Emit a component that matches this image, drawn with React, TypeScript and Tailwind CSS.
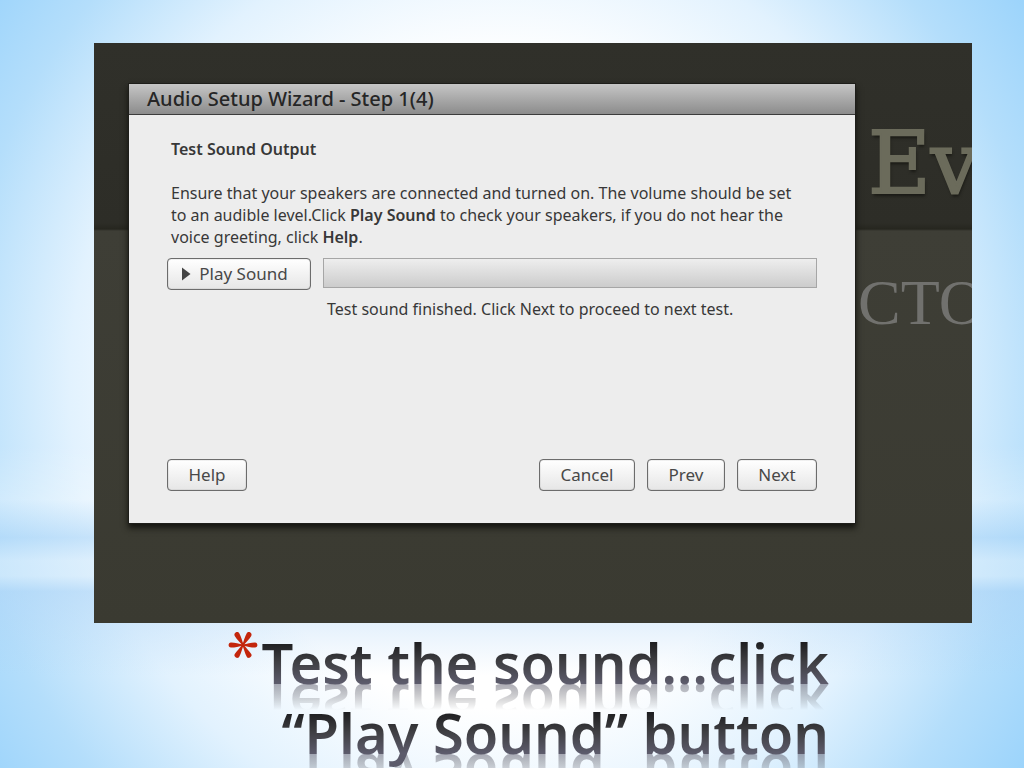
import React from 'react';

interface WizardButtonProps {
    children: React.ReactNode;
    className?: string;
}

const WizardButton: React.FC<WizardButtonProps> = ({ children, className = '' }) => (
    <button
        type="button"
        className={`flex h-8 items-center justify-center gap-2 rounded border border-[#6c6c6c] bg-linear-to-b from-white to-[#e6e6e6] text-[17px] text-[#484848] shadow-[inset_0_0_1px_#6c6c6c] ${className}`}
    >
        {children}
    </button>
);

const PlayIcon: React.FC = () => (
    <svg width="9" height="14" viewBox="0 0 9 14" aria-hidden="true">
        <path d="M0 0.5 L8.5 7 L0 13.5 Z" fill="#454545" />
    </svg>
);

const PETAL = 'M0 0.7 C4 1.2 8 2.6 12 2.6 C15.2 2.6 15.2 -2.6 12 -2.6 C8 -2.6 4 -1.2 0 -0.7 Z';

// Six-petal bullet in front of the slide title
const BulletIcon: React.FC = () => (
    <svg width="30" height="30" viewBox="-15 -15 30 30" fill="#c3260c" role="img" aria-label="*">
        {[0, 60, 120, 180, 240, 300].map(angle => (
            <path key={angle} d={PETAL} transform={`rotate(${angle})`} />
        ))}
    </svg>
);

const TitleLine: React.FC<{ children: React.ReactNode }> = ({ children }) => (
    <span className="block h-[70px] bg-linear-to-b from-[#1c1c1e] from-20% via-[#3f3f43] via-50% to-[#5c5b6b] to-80% bg-clip-text text-transparent [-webkit-box-reflect:below_-26px_linear-gradient(transparent_44%,rgba(0,0,0,0.5)_81%,transparent_81%)]">
        {children}
    </span>
);

const AudioWizard: React.FC = () => (
    <section
        aria-labelledby="wizard-title"
        className="flex min-w-0 flex-1 flex-col border border-[#1e1e1a] bg-[#ededed] shadow-[0_4px_6px_#14140f]"
    >
        <header className="flex h-[31px] items-center border-b border-[#3c3c3c] bg-linear-to-b from-[#c6c6c6] to-[#8c8c8c] px-[18px]">
            <h2 id="wizard-title" className="text-xl leading-7 font-medium text-[#262626]">Audio Setup Wizard - Step 1(4)</h2>
        </header>

        <div className="flex flex-1 flex-col px-[38px] pt-[23px] pb-8 text-[#383838]">
            <h3 className="px-1 text-base leading-[22px] font-semibold">Test Sound Output</h3>
            <p className="mt-[22px] px-1 text-base leading-[22px] whitespace-nowrap">
                Ensure that your speakers are connected and turned on. The volume should be set<br />
                to an audible level.Click <b className="font-semibold">Play Sound</b> to check your speakers, if you do not hear the<br />
                voice greeting, click <b className="font-semibold">Help</b>.
            </p>

            <div className="mt-2.5 grid grid-cols-[144px_1fr] gap-x-3">
                <WizardButton className="w-full pr-2">
                    <PlayIcon />
                    Play Sound
                </WizardButton>
                <div
                    role="progressbar"
                    aria-label="Test sound"
                    className="h-[30px] border border-[#a6a6a6] bg-linear-to-b from-[#eeeeee] to-[#cccccc]"
                />
                <p className="col-start-2 mt-2 px-1 text-base leading-[22px] whitespace-nowrap">
                    Test sound finished. Click Next to proceed to next test.
                </p>
            </div>

            <div className="mt-auto flex items-center gap-3">
                <WizardButton className="mr-auto w-20">Help</WizardButton>
                <WizardButton className="w-24">Cancel</WizardButton>
                <WizardButton className="w-[78px]">Prev</WizardButton>
                <WizardButton className="w-20">Next</WizardButton>
            </div>
        </div>
    </section>
);

const App: React.FC = () => {
    return (
        <div className="h-screen overflow-hidden bg-[linear-gradient(to_bottom,transparent_58%,rgba(255,255,255,0.25)_65%,rgba(170,212,247,0.5)_70%,rgba(220,238,252,0.5)_73%,rgba(220,238,252,0.5)_75%,rgba(170,210,246,0.5)_77%,transparent_88%),radial-gradient(ellipse_62%_88%_at_49%_50%,#ffffff_48%,#e2f2fe_68%,#b4defb_86%,#9cd4fb_100%)] font-['Noto_Sans','Open_Sans',sans-serif]">
            <main className="pt-[43px] pr-[52px] pl-[94px]">
                {/* Meeting room behind the wizard */}
                <div className="flex h-[580px] overflow-hidden bg-[linear-gradient(#30302a_0px,#2d2d27_180px,#26261f_186px,#3e3e36_188px,#3a3a31_100%)] pt-10 pb-[99px] pl-[34px]">
                    <AudioWizard />
                    <div className="w-[116px] shrink-0 overflow-hidden pl-0.5 whitespace-nowrap">
                        <p className="mt-[34px] pl-2.5 font-['DejaVu_Serif',serif] text-[86px] leading-[92px] text-[#6b6b5b] [-webkit-text-stroke:2px_#6b6b5b] [text-shadow:1px_3px_3px_#1a1a15]">Ev</p>
                        <p className="mt-[62px] font-['Liberation_Serif',serif] text-[64px] leading-[64px] text-[#71716e]">CTO</p>
                    </div>
                </div>

                <h1 className="flex items-start justify-end gap-1 pr-[143px] text-[56px] leading-[70px] font-semibold whitespace-nowrap">
                    <span className="pt-[7px]">
                        <BulletIcon />
                    </span>
                    <span className="mt-1 text-right">
                        <TitleLine>Test the sound…click</TitleLine>
                        <TitleLine>“Play Sound” button</TitleLine>
                    </span>
                </h1>
            </main>
        </div>
    );
};

export default App;
